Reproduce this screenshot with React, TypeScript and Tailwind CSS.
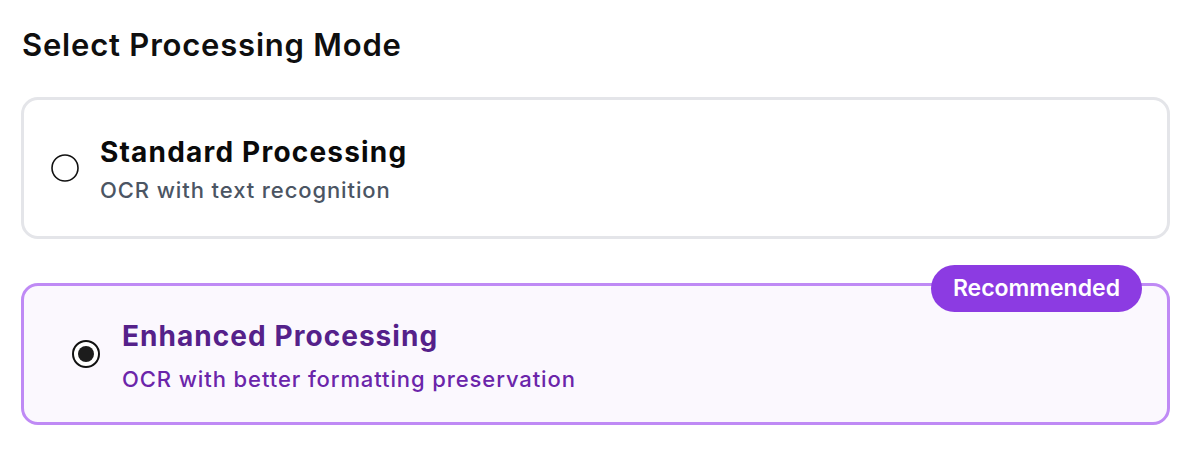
import React from "react";

function Radio({ checked }: { checked: boolean }) {
  return (
    <svg width="28" height="28" viewBox="0 0 28 28" className="shrink-0">
      <circle cx="14" cy="14" r="13" fill="#ffffff" stroke="#111111" strokeWidth={checked ? 2 : 1.6} />
      {checked && <circle cx="14" cy="14" r="8" fill="#1c1c1c" />}
    </svg>
  );
}

export default function App() {
  return (
    <div
      className="min-h-[476px] w-[1200px] bg-white pl-[21px] pr-[30px] pt-[26px]"
      style={{ fontFamily: "Inter, 'Noto Sans', sans-serif" }}
    >
      <h2 className="text-[31px] leading-[37px] font-semibold text-[#0f0f0f] pl-[1px] tracking-[0.8px]">
        Select Processing Mode
      </h2>

      <div className="mt-[34px] flex h-[142px] items-center rounded-[17px] border-[3px] border-[#e4e5e9] bg-white pl-[27px]">
        <Radio checked={false} />
        <div className="ml-[21px] flex flex-col pt-[4px]">
          <div className="text-[28px] leading-[35px] font-bold tracking-[1.2px] text-[#0a0a0a]">
            Standard Processing
          </div>
          <div className="mt-[6px] text-[22px] leading-[29px] font-medium tracking-[0.9px] text-[#4b5563]">
            OCR with text recognition
          </div>
        </div>
      </div>

      <div className="relative mt-[44px] flex h-[142px] items-center rounded-[17px] border-[3px] border-[#bf8af5] bg-[#fbf8fe] pl-[48px]">
        <div className="absolute right-[25px] top-[-21px] flex h-[47px] items-center rounded-full bg-[#8c3be2] px-[22px] text-[23px] font-semibold text-white">
          Recommended
        </div>
        <Radio checked={true} />
        <div className="ml-[22px] flex flex-col pt-[4px]">
          <div className="text-[28px] leading-[35px] font-bold tracking-[1.05px] text-[#55218a]">
            Enhanced Processing
          </div>
          <div className="mt-[11px] text-[22px] leading-[29px] font-medium tracking-[0.9px] text-[#6b25aa]">
            OCR with better formatting preservation
          </div>
        </div>
      </div>
    </div>
  );
}
